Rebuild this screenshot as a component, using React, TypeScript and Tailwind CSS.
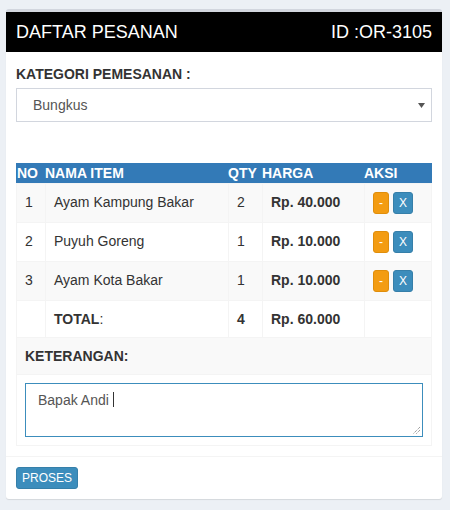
const ITEMS = [
  { no: 1, name: "Ayam Kampung Bakar", qty: 2, price: "Rp. 40.000" },
  { no: 2, name: "Puyuh Goreng", qty: 1, price: "Rp. 10.000" },
  { no: 3, name: "Ayam Kota Bakar", qty: 1, price: "Rp. 10.000" },
];

const COLS = "grid grid-cols-[28px_183px_34px_102px_1fr]";
const CELL = "p-2 leading-[20px] border-l border-[#f4f4f4]";

export default function App() {
  return (
    <div className="min-h-[510px] bg-[#ecf0f5] pt-[9px] pl-[6px] font-['Liberation_Sans',Arial,sans-serif] text-[14px] text-[#333]">
      <div className="w-[436px] rounded-[3px] border-t-[3px] border-[#d2d6de] bg-white shadow-[0_1px_1px_rgba(0,0,0,0.1)]">
        {/* header */}
        <div className="flex h-[40px] items-center justify-between bg-black px-[10px] text-[18px] text-white">
          <span>DAFTAR PESANAN</span>
          <span>ID :OR-3105</span>
        </div>

        <div className="px-[10px] pt-[12px] pb-[10px]">
          <label className="mb-[4px] block font-bold leading-[20px]">KATEGORI PEMESANAN :</label>
          <div className="flex h-[34px] items-center justify-between border border-[#d2d6de] pl-4 pr-[6px] text-[#555]">
            <span>Bungkus</span>
            <svg width="7" height="5" viewBox="0 0 7 5">
              <path d="M0 0h7L3.5 5z" fill="#555" />
            </svg>
          </div>

          {/* table */}
          <div className="mt-[41px] grid h-[20px] grid-cols-[29px_183px_34px_102px_1fr] bg-[#337ab7] font-bold leading-[20px] text-white">
            <span className="pl-px">NO</span>
            <span>NAMA ITEM</span>
            <span>QTY</span>
            <span>HARGA</span>
            <span>AKSI</span>
          </div>
          <div className="border border-[#f4f4f4]">
            {ITEMS.map((item, i) => (
              <div
                key={item.no}
                className={`${COLS} border-b border-[#f4f4f4] ${i % 2 === 0 ? "bg-[#f9f9f9]" : "bg-white"}`}
              >
                <div className="p-2 leading-[20px]">{item.no}</div>
                <div className={CELL}>{item.name}</div>
                <div className={CELL}>{item.qty}</div>
                <div className={`${CELL} font-bold`}>{item.price}</div>
                <div className={`${CELL} flex gap-1`}>
                  <button className="h-[22px] rounded-[3px] border border-[#e08e0b] bg-[#f39c12] px-[5px] text-[12px] leading-[18px] text-white">
                    -
                  </button>
                  <button className="h-[22px] rounded-[3px] border border-[#367fa9] bg-[#3c8dbc] px-[5px] text-[12px] leading-[18px] text-white">
                    X
                  </button>
                </div>
              </div>
            ))}
            <div className={`${COLS} border-b border-[#f4f4f4] bg-white`}>
              <div className="p-2 leading-[20px]"></div>
              <div className={CELL}>
                <b>TOTAL</b>:
              </div>
              <div className={`${CELL} font-bold`}>4</div>
              <div className={`${CELL} font-bold`}>Rp. 60.000</div>
              <div className={CELL}></div>
            </div>
            <div className="border-b border-[#f4f4f4] bg-[#f9f9f9] p-2 font-bold leading-[20px]">KETERANGAN:</div>
            <div className="p-2">
              <div className="relative h-[54px] border border-[#3c8dbc] px-3 py-[6px] leading-[20px] text-[#555]">
                Bapak Andi
                <span className="ml-[4px] inline-block h-[15px] w-px bg-[#333] align-[-2px]" />
                <svg className="absolute right-px bottom-px" width="9" height="9" viewBox="0 0 9 9">
                  <path d="M8 1L1 8M8 4L4 8" stroke="#777" strokeWidth="1" strokeDasharray="1 1" />
                </svg>
              </div>
            </div>
          </div>
        </div>

        {/* footer */}
        <div className="border-t border-[#f4f4f4] p-[10px]">
          <button className="h-[22px] rounded-[3px] border border-[#367fa9] bg-[#3c8dbc] px-[5px] text-[12px] leading-[18px] text-white">
            PROSES
          </button>
        </div>
      </div>
    </div>
  );
}
